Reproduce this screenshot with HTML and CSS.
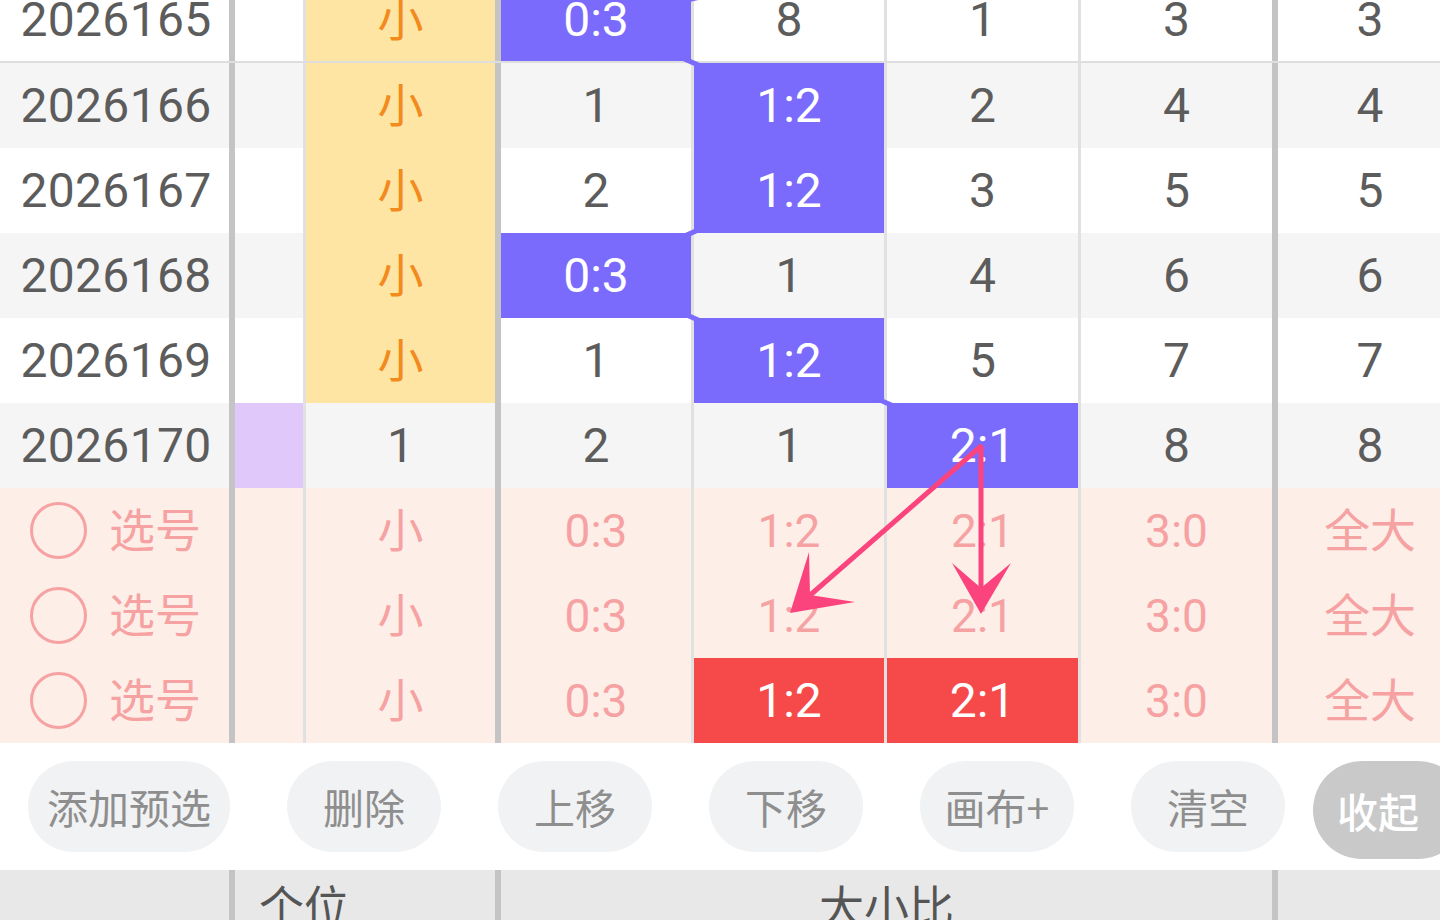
FILE: index.html
```html
<!DOCTYPE html>
<html lang="zh-CN">
<head>
<meta charset="utf-8">
<title>走势图</title>
<link rel="stylesheet" href="styles.css">
</head>
<body>
<div class="screen">
  <div class="board">
    <div class="row first">
      <div class="c th num"><span class="t">2026165</span></div>
      <div class="c tn"></div>
      <div class="c th yel"><span class="t">小</span></div>
      <div class="c tn hit"><span class="t">0:3</span></div>
      <div class="c tn"><span class="t">8</span></div>
      <div class="c tn"><span class="t">1</span></div>
      <div class="c th"><span class="t">3</span></div>
      <div class="c"><span class="t">3</span></div>
    </div>
    <div class="row alt">
      <div class="c th num"><span class="t">2026166</span></div>
      <div class="c tn"></div>
      <div class="c th yel"><span class="t">小</span></div>
      <div class="c tn"><span class="t">1</span></div>
      <div class="c tn hit"><span class="t">1:2</span></div>
      <div class="c tn"><span class="t">2</span></div>
      <div class="c th"><span class="t">4</span></div>
      <div class="c"><span class="t">4</span></div>
    </div>
    <div class="row">
      <div class="c th num"><span class="t">2026167</span></div>
      <div class="c tn"></div>
      <div class="c th yel"><span class="t">小</span></div>
      <div class="c tn"><span class="t">2</span></div>
      <div class="c tn hit"><span class="t">1:2</span></div>
      <div class="c tn"><span class="t">3</span></div>
      <div class="c th"><span class="t">5</span></div>
      <div class="c"><span class="t">5</span></div>
    </div>
    <div class="row alt">
      <div class="c th num"><span class="t">2026168</span></div>
      <div class="c tn"></div>
      <div class="c th yel"><span class="t">小</span></div>
      <div class="c tn hit"><span class="t">0:3</span></div>
      <div class="c tn"><span class="t">1</span></div>
      <div class="c tn"><span class="t">4</span></div>
      <div class="c th"><span class="t">6</span></div>
      <div class="c"><span class="t">6</span></div>
    </div>
    <div class="row">
      <div class="c th num"><span class="t">2026169</span></div>
      <div class="c tn"></div>
      <div class="c th yel"><span class="t">小</span></div>
      <div class="c tn"><span class="t">1</span></div>
      <div class="c tn hit"><span class="t">1:2</span></div>
      <div class="c tn"><span class="t">5</span></div>
      <div class="c th"><span class="t">7</span></div>
      <div class="c"><span class="t">7</span></div>
    </div>
    <div class="row alt">
      <div class="c th num"><span class="t">2026170</span></div>
      <div class="c tn lilac"></div>
      <div class="c th"><span class="t">1</span></div>
      <div class="c tn"><span class="t">2</span></div>
      <div class="c tn"><span class="t">1</span></div>
      <div class="c tn hit"><span class="t">2:1</span></div>
      <div class="c th"><span class="t">8</span></div>
      <div class="c"><span class="t">8</span></div>
    </div>

    <div class="row pick">
      <div class="c th pick-a"><span class="ring"></span><span class="t">选号</span></div>
      <div class="c tn"></div>
      <div class="c th"><span class="t">小</span></div>
      <div class="c tn"><span class="t">0:3</span></div>
      <div class="c tn"><span class="t">1:2</span></div>
      <div class="c tn"><span class="t">2:1</span></div>
      <div class="c th"><span class="t">3:0</span></div>
      <div class="c"><span class="t">全大</span></div>
    </div>
    <div class="row pick">
      <div class="c th pick-a"><span class="ring"></span><span class="t">选号</span></div>
      <div class="c tn"></div>
      <div class="c th"><span class="t">小</span></div>
      <div class="c tn"><span class="t">0:3</span></div>
      <div class="c tn"><span class="t">1:2</span></div>
      <div class="c tn"><span class="t">2:1</span></div>
      <div class="c th"><span class="t">3:0</span></div>
      <div class="c"><span class="t">全大</span></div>
    </div>
    <div class="row pick">
      <div class="c th pick-a"><span class="ring"></span><span class="t">选号</span></div>
      <div class="c tn"></div>
      <div class="c th"><span class="t">小</span></div>
      <div class="c tn"><span class="t">0:3</span></div>
      <div class="c tn red"><span class="t">1:2</span></div>
      <div class="c tn red"><span class="t">2:1</span></div>
      <div class="c th"><span class="t">3:0</span></div>
      <div class="c"><span class="t">全大</span></div>
    </div>

    <svg class="trend" viewBox="0 -22 1462 765" width="1462" height="765">
      <polyline points="982,-65 596,20 789,105 789,190 596,275 789,360 982,445" fill="none" stroke="#7a6bfd" stroke-width="5" stroke-linejoin="round"/>
    </svg>
    <svg class="arrows" viewBox="0 -22 1462 765" width="1462" height="765">
      <line x1="981" y1="447" x2="981" y2="592" stroke="#fb447d" stroke-width="5" stroke-linecap="round"/>
      <path d="M981,614 L952,563 L981,588 L1011,563 Z" fill="#fb447d"/>
      <line x1="980" y1="447" x2="808" y2="597" stroke="#fb447d" stroke-width="5" stroke-linecap="round"/>
      <path d="M790,613 L809,552 L810,595 L855,602 Z" fill="#fb447d"/>
    </svg>
  </div>

  <div class="toolbar">
    <button class="btn wide">添加预选</button>
    <button class="btn">删除</button>
    <button class="btn">上移</button>
    <button class="btn">下移</button>
    <button class="btn">画布+</button>
    <button class="btn">清空</button>
    <button class="btn fold">收起</button>
  </div>

  <div class="head">
    <div class="h th"></div>
    <div class="h th left">个位</div>
    <div class="h th">大小比</div>
    <div class="h"></div>
  </div>
</div>
</body>
</html>
```

FILE: styles.css
```css
html, body {
  margin: 0;
  padding: 0;
  width: 1440px;
  height: 920px;
  overflow: hidden;
  background: #ffffff;
}

.screen {
  width: 1440px;
  height: 920px;
  overflow: hidden;
  font-family: Roboto, "Noto Sans CJK SC", sans-serif;
}

.board {
  position: relative;
  width: 1462px;
  margin-top: -22px;
}

.row {
  display: grid;
  grid-template-columns: 235px 71px 195px 193px 193px 194px 197px 184px;
  height: 85px;
  background: #ffffff;
  color: #5c5c5c;
  font-size: 48px;
}

.row.first {
  box-sizing: border-box;
  border-bottom: 2px solid #dedede;
}

.row.alt {
  background: #f5f5f5;
}

.c {
  box-sizing: border-box;
  display: flex;
  align-items: center;
  justify-content: center;
  line-height: 1;
}

.th {
  border-right: 6px solid #c4c4c4;
}

.tn {
  border-right: 3px solid #e1e1e1;
}

.t {
  position: relative;
  z-index: 2;
}

.num {
  letter-spacing: 0.3px;
  padding-left: 3px;
}

.yel {
  background: #fee5a3;
  color: #f28a1d;
  font-size: 46px;
}

.hit {
  background: #7a6bfd;
  color: #ffffff;
}

.lilac {
  background: #e1c8fb;
}

.row.pick {
  background: #fdeee8;
  color: #f6a2a2;
}

.row.pick .c {
  font-size: 46px;
}

.row.pick .red {
  background: #f64a4a;
  color: #ffffff;
  font-size: 48px;
}

.pick-a {
  justify-content: flex-start;
  padding-left: 30px;
  gap: 22px;
}

.ring {
  width: 57px;
  height: 57px;
  box-sizing: border-box;
  border: 3px solid #f6a2a2;
  border-radius: 50%;
  flex: none;
}

.trend {
  position: absolute;
  left: 0;
  top: 0;
  z-index: 1;
  pointer-events: none;
}

.arrows {
  position: absolute;
  left: 0;
  top: 0;
  z-index: 3;
  pointer-events: none;
}

.toolbar {
  height: 127px;
  box-sizing: border-box;
  padding: 18px 0 0 28px;
  display: flex;
  align-items: flex-start;
  gap: 57px;
  background: #ffffff;
  white-space: nowrap;
}

.btn {
  height: 91px;
  min-width: 154px;
  box-sizing: border-box;
  padding: 0 21px;
  border: none;
  border-radius: 46px;
  background: #f1f2f4;
  color: #8e8e8e;
  font-family: "Noto Sans CJK SC", sans-serif;
  font-size: 41px;
  line-height: 1;
  display: flex;
  align-items: center;
  justify-content: center;
  flex: none;
}

.btn.wide {
  width: 202px;
  padding: 0;
}

.btn.fold {
  height: 98px;
  margin-left: -29px;
  border-radius: 49px;
  padding: 0 40px 0 24px;
  justify-content: flex-start;
  background: #c9c9c9;
  color: #ffffff;
  font-size: 41px;
  font-weight: 500;
}

.head {
  display: grid;
  grid-template-columns: 235px 266px 777px 184px;
  height: 80px;
  background: #e8e8e8;
  color: #555555;
  font-family: "Noto Sans CJK SC", sans-serif;
  font-size: 45px;
  width: 1462px;
}

.h {
  box-sizing: border-box;
  display: flex;
  align-items: center;
  justify-content: center;
  padding-bottom: 12px;
  line-height: 1;
}

.h.left {
  justify-content: flex-start;
  padding-left: 24px;
}
```
